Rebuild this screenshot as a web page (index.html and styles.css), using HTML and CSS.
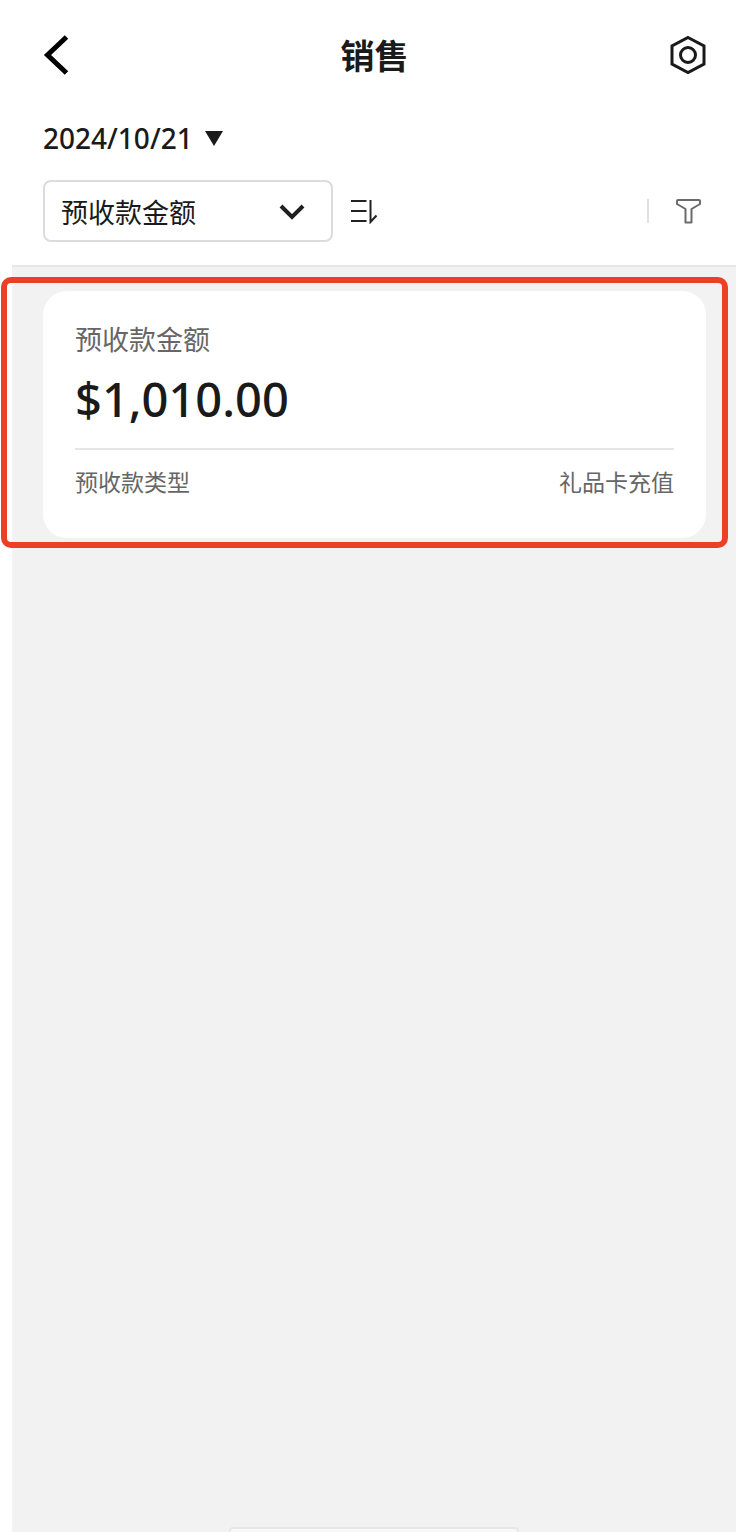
FILE: index.html
```
<!DOCTYPE html>
<html lang="zh-CN">
<head>
    <meta charset="UTF-8">
    <meta name="viewport" content="width=device-width, initial-scale=1.0">
    <title>销售</title>

    <link rel="stylesheet" href="styles.css">
</head>
<body>
    <div class="page">
        <header class="top">
            <div class="title-bar">
                <button class="icon-button" aria-label="返回">
                    <svg width="26" height="40" viewBox="0 0 26 40" fill="none" stroke="#000" stroke-width="5">
                        <path d="M23.500 2 4.500 20l19 18"/>
                    </svg>
                </button>
                <h1>销售</h1>
                <button class="icon-button settings" aria-label="设置">
                    <svg width="36" height="40" viewBox="0 0 36 40" fill="none" stroke="#1a1a1a" stroke-width="3">
                        <path d="M18 2.500 34 11V29L18 37.500 2 29V11Z"/>
                        <circle cx="18" cy="20" r="7.500"/>
                    </svg>
                </button>
            </div>

            <button class="date-button">
                2024/10/21
                <svg width="18" height="16" viewBox="0 0 18 16" fill="#1a1a1a"><path d="M0 1h18L9 16Z"/></svg>
            </button>

            <div class="filters">
                <div class="select-box">
                    <select class="metric" aria-label="指标">
                        <option>预收款金额</option>
                    </select>
                    <svg class="chevron" width="26" height="18" viewBox="0 0 26 18" fill="none" stroke="#1f1f1f" stroke-width="4"><path d="m2 4 11 11L24 4"/></svg>
                </div>
                <button class="icon-button" aria-label="排序">
                    <svg width="28" height="26" viewBox="0 0 28 26" fill="none" stroke="#222" stroke-width="2">
                        <path d="M1 3h15.500M1 13h15.500M1 23h15.500M20.500 2v22l6-6.500"/>
                    </svg>
                </button>
                <span class="divider"></span>
                <button class="icon-button" aria-label="筛选">
                    <svg width="26" height="26" viewBox="0 0 26 26" fill="none" stroke="#6b6b6b" stroke-width="2" stroke-linejoin="round">
                        <path d="M2 2h21q1 0 1 1v3L15.500 11v13.500h-6V11L1 6V3q0-1 1-1Z"/>
                    </svg>
                </button>
            </div>
        </header>

        <main>
            <section class="card">
                <p class="label">预收款金额</p>
                <p class="amount">$1,010.00</p>
                <div class="detail">
                    <span>预收款类型</span>
                    <span>礼品卡充值</span>
                </div>
                <div class="highlight"></div>
            </section>
        </main>
        <div class="bottom-sheet"></div>
    </div>
</body>
</html>
```

FILE: styles.css
```
:root {
    --text: #1a1a1a;
    --grey: #666;
    --line: #e6e6e6;
    --background: #f2f2f2;
    --highlight: #ec4026;
}

* {
    margin: 0;
    padding: 0;
    box-sizing: border-box;
}

body {
    background: #fff;
    color: var(--text);
    font-family: "Noto Sans", "Noto Sans CJK SC", sans-serif;
}

button, select {
    appearance: none;
    background: none;
    border: none;
    color: inherit;
    font: inherit;
    cursor: pointer;
}

svg {
    display: block;
}

.page {
    position: relative;
    display: flex;
    flex-direction: column;
    min-height: 100vh;
    margin-left: 12px;
}

.top {
    padding: 0 30px 23px 31px;
    border-bottom: 2px solid var(--line);
}

.title-bar {
    display: grid;
    grid-template-columns: 40px 1fr 40px;
    align-items: center;
    height: 110px;
}

.settings {
    justify-self: end;
}

h1 {
    font-family: "Noto Sans CJK SC", sans-serif;
    font-size: 34px;
    font-weight: 700;
    line-height: 40px;
    text-align: center;
}

.date-button {
    display: flex;
    align-items: center;
    gap: 12px;
    height: 56px;
    margin-bottom: 14px;
    font-size: 28px;
    font-weight: 500;
}

.filters {
    display: flex;
    align-items: center;
    gap: 17px;
    padding-right: 4px;
}

.select-box {
    position: relative;
    flex: 0 1 290px;
}

.metric {
    width: 100%;
    height: 62px;
    padding: 0 56px 0 16px;
    border: 2px solid #dcdcdc;
    border-radius: 8px;
    font-family: "Noto Sans CJK SC", sans-serif;
    font-size: 27px;
}

.chevron {
    position: absolute;
    top: 22px;
    right: 28px;
    pointer-events: none;
}

.divider {
    width: 2px;
    height: 24px;
    margin-left: auto;
    margin-right: 10px;
    background: #e0e0e0;
}

main {
    flex: 1;
    padding: 24px 30px 24px 31px;
    background: var(--background);
}

.card {
    position: relative;
    padding: 26px 32px 28px;
    border-radius: 24px;
    background: #fff;
}

.label {
    color: var(--grey);
    font-family: "Noto Sans CJK SC", sans-serif;
    font-size: 27px;
    line-height: 44px;
}

.amount {
    padding: 2px 0 13px;
    border-bottom: 2px solid var(--line);
    font-size: 47px;
    font-weight: 500;
    line-height: 72px;
}

.detail {
    display: flex;
    justify-content: space-between;
    padding: 13px 0 11px;
    color: var(--grey);
    font-family: "Noto Sans CJK SC", sans-serif;
    font-size: 23px;
    line-height: 36px;
}

.highlight {
    position: absolute;
    inset: -14px -22px -10px -42px;
    border: 6px solid var(--highlight);
    border-radius: 10px;
    pointer-events: none;
}

.bottom-sheet {
    position: absolute;
    bottom: 0;
    left: 30%;
    right: 30%;
    height: 5px;
    border: 2px solid #e8e8e8;
    border-bottom: none;
    border-radius: 4px 4px 0 0;
    background: #f8f8f8;
}
```
